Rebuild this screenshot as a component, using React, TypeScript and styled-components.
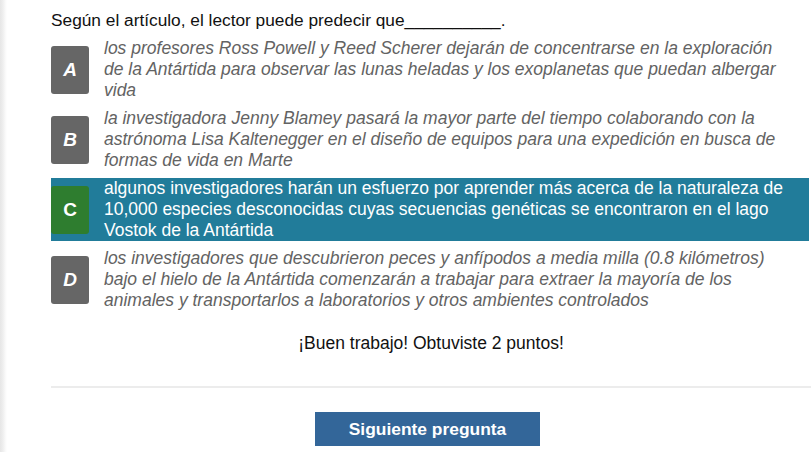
import React from "react";
import styled, { createGlobalStyle } from "styled-components";

const Global = createGlobalStyle`
  html, body { margin: 0; padding: 0; background: #ffffff; }
  body { font-family: "Liberation Sans", Arial, sans-serif; overflow: hidden; }
`;

const Page = styled.div`
  width: 811px;
  height: 452px;
  display: flex;
  background: #ffffff;
`;

const Shadow = styled.div`
  width: 7px;
  flex: none;
  background: linear-gradient(to right, #e6e6e6 0px, #efefef 3px, #f8f8f8 5px, #ffffff 7px);
`;

const Card = styled.div`
  flex: 1;
  padding: 10px 0 0 44px;
  display: flex;
  flex-direction: column;
`;

const Question = styled.div`
  font-size: 17.3px;
  line-height: 20px;
  color: #111;
  margin-bottom: 8px;
`;

const Options = styled.div`
  display: flex;
  flex-direction: column;
  gap: 7px;
  margin-right: 2px;
`;

const Row = styled.div<{ $selected?: boolean }>`
  display: flex;
  align-items: center;
  gap: 15px;
  min-height: 63px;
  padding-right: 19px;
  background: ${(p) => (p.$selected ? "#217c9a" : "transparent")};
`;

const Badge = styled.div<{ $correct?: boolean }>`
  width: 38px;
  height: 48px;
  flex: none;
  border-radius: 3px;
  background: ${(p) => (p.$correct ? "#2e7d2f" : "#666666")};
  color: #ffffff;
  font-weight: bold;
  font-style: ${(p) => (p.$correct ? "normal" : "italic")};
  font-size: 19px;
  display: flex;
  align-items: center;
  justify-content: center;
`;

const OptionText = styled.div<{ $selected?: boolean }>`
  width: 686px;
  font-size: 17.5px;
  line-height: 21px;
  color: ${(p) => (p.$selected ? "#ffffff" : "#636363")};
  font-style: ${(p) => (p.$selected ? "normal" : "italic")};
`;

const Feedback = styled.div`
  margin-top: 22px;
  text-align: center;
  font-size: 17.5px;
  line-height: 20px;
  color: #111;
`;

const Divider = styled.div`
  margin-top: 33px;
  height: 2px;
  background: #ececec;
`;

const ButtonRow = styled.div`
  margin-top: 24px;
  display: flex;
  justify-content: center;
  padding-right: 7px;
`;

const NextButton = styled.button`
  width: 225px;
  height: 34px;
  border: none;
  border-radius: 0;
  background: #336699;
  color: #ffffff;
  font-family: "Liberation Sans", Arial, sans-serif;
  font-weight: bold;
  font-size: 17.4px;
  cursor: pointer;
`;

const options = [
  {
    letter: "A",
    text: "los profesores Ross Powell y Reed Scherer dejarán de concentrarse en la exploración de la Antártida para observar las lunas heladas y los exoplanetas que puedan albergar vida",
  },
  {
    letter: "B",
    text: "la investigadora Jenny Blamey pasará la mayor parte del tiempo colaborando con la astrónoma Lisa Kaltenegger en el diseño de equipos para una expedición en busca de formas de vida en Marte",
  },
  {
    letter: "C",
    text: "algunos investigadores harán un esfuerzo por aprender más acerca de la naturaleza de 10,000 especies desconocidas cuyas secuencias genéticas se encontraron en el lago Vostok de la Antártida",
    selected: true,
  },
  {
    letter: "D",
    text: "los investigadores que descubrieron peces y anfípodos a media milla (0.8 kilómetros) bajo el hielo de la Antártida comenzarán a trabajar para extraer la mayoría de los animales y transportarlos a laboratorios y otros ambientes controlados",
  },
];

export default function App() {
  return (
    <>
      <Global />
      <Page>
        <Shadow />
        <Card>
          <Question>Según el artículo, el lector puede predecir que__________.</Question>
          <Options>
            {options.map((o) => (
              <Row key={o.letter} $selected={o.selected}>
                <Badge $correct={o.selected}>{o.letter}</Badge>
                <OptionText $selected={o.selected}>{o.text}</OptionText>
              </Row>
            ))}
          </Options>
          <Feedback>¡Buen trabajo! Obtuviste 2 puntos!</Feedback>
          <Divider />
          <ButtonRow>
            <NextButton>Siguiente pregunta</NextButton>
          </ButtonRow>
        </Card>
      </Page>
    </>
  );
}
